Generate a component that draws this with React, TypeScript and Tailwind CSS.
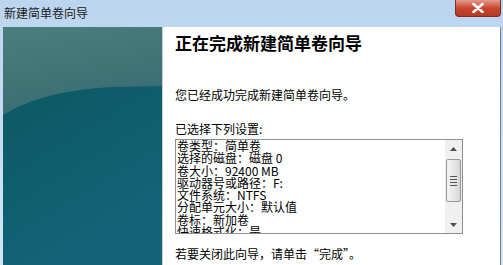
const settings = [
  "卷类型：简单卷",
  "选择的磁盘：磁盘 0",
  "卷大小：92400 MB",
  "驱动器号或路径：F:",
  "文件系统：NTFS",
  "分配单元大小：默认值",
  "卷标：新加卷",
  "快速格式化：是",
];

function LeftPanel() {
  return (
    <div className="w-[159px] h-full shrink-0">
      <svg width="159" height="238" viewBox="0 0 159 238" className="block">
        <defs>
          <linearGradient id="lower" x1="0" y1="0" x2="0.4" y2="1">
            <stop offset="0" stopColor="#0c5560" />
            <stop offset="0.6" stopColor="#0f5e6c" />
            <stop offset="1" stopColor="#136478" />
          </linearGradient>
          <linearGradient id="upper" x1="0" y1="0" x2="0.3" y2="1">
            <stop offset="0" stopColor="#4a7e7e" />
            <stop offset="1" stopColor="#3a6d72" />
          </linearGradient>
        </defs>
        <rect width="159" height="238" fill="url(#lower)" />
        <path d="M0 88 Q 38 64 108 60 L159 59 L159 0 L0 0 Z" fill="url(#upper)" />
      </svg>
    </div>
  );
}

function ListBox() {
  return (
    <div className="mt-[2px] w-[288px] h-[95px] border border-[#8e8f8f] flex overflow-hidden">
      <div className="flex-1 pl-[1px] text-[12px] leading-[12.3px] text-black overflow-hidden">
        {settings.map((s) => (
          <div key={s} className="whitespace-nowrap">{s}</div>
        ))}
      </div>
      <div className="w-[17px] h-full bg-[#f0f0f0] flex flex-col items-center">
        <div className="h-[17px] w-full flex items-center justify-center">
          <svg width="7" height="4" viewBox="0 0 7 4"><path d="M0 4 L3.5 0 L7 4 Z" fill="#4d4d4d" /></svg>
        </div>
        <div className="mt-[2px] h-[43px] w-[15px] rounded-[2px] border border-[#979797] bg-gradient-to-r from-[#f3f3f3] via-[#e8e8e8] to-[#d6d6d6] flex flex-col items-center justify-center gap-[2px]">
          <div className="w-[7px] h-px bg-[#555]" />
          <div className="w-[7px] h-px bg-[#555]" />
          <div className="w-[7px] h-px bg-[#555]" />
          <div className="w-[7px] h-px bg-[#555]" />
        </div>
        <div className="flex-1" />
        <div className="h-[17px] w-full flex items-center justify-center">
          <svg width="7" height="4" viewBox="0 0 7 4"><path d="M0 0 L3.5 4 L7 0 Z" fill="#4d4d4d" /></svg>
        </div>
      </div>
    </div>
  );
}

export default function App() {
  return (
    <div
      className="w-[503px] h-[265px] overflow-hidden flex flex-col bg-gradient-to-b from-[#bcd5ef] to-[#d3e3f5] text-[#000]"
      style={{ fontFamily: '"Noto Sans CJK SC", "Noto Sans", sans-serif' }}
    >
      <div className="h-[27px] shrink-0 flex items-start justify-between">
        <div className="pl-[4px] pt-[5px] text-[12px] leading-[16px] text-[#1b1b1b]">新建简单卷向导</div>
        <div className="mr-[2px] w-[46px] h-[17px] rounded-b-[4px] border border-t-0 border-[#7e2d24] bg-gradient-to-b from-[#e29a8c] via-[#c9462f] to-[#b53a22] flex items-center justify-center">
          <svg width="12" height="10" viewBox="0 0 12 10">
            <path d="M1.5 1 L10.5 9 M10.5 1 L1.5 9" stroke="#fff" strokeWidth="2.6" strokeLinecap="round" />
          </svg>
        </div>
      </div>
      <div className="flex-1 flex pl-[3px] pr-[2px]">
        <LeftPanel />
        <div className="flex-1 bg-white border-l border-[#c8ccd0] border-r border-r-[#6f8599] pl-[12px]">
          <div className="pt-[6px] text-[17px] leading-[20px] font-bold">正在完成新建简单卷向导</div>
          <div className="mt-[34px] text-[12px] leading-[16px]">您已经成功完成新建简单卷向导。</div>
          <div className="mt-[18px] text-[12px] leading-[16px]">已选择下列设置:</div>
          <ListBox />
          <div className="mt-[12px] text-[12px] leading-[16px]">若要关闭此向导，请单击“完成”。</div>
        </div>
      </div>
    </div>
  );
}
